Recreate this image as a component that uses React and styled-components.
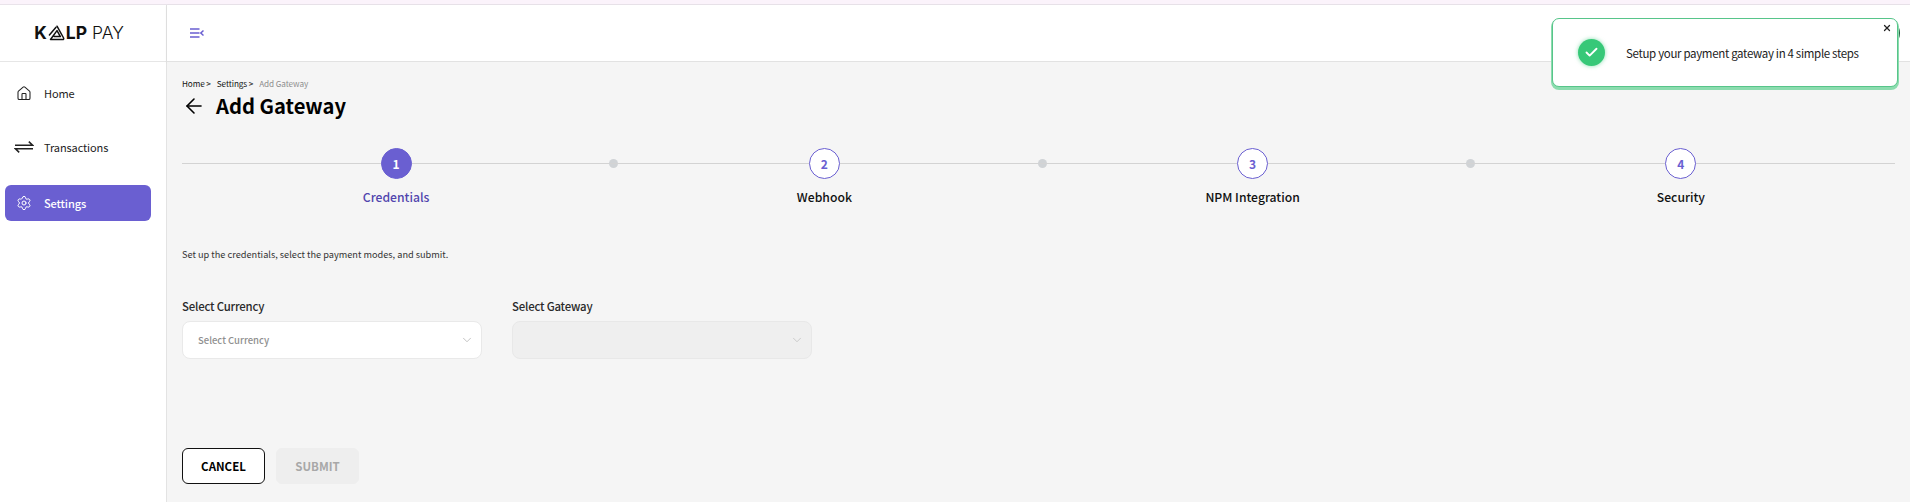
import React from 'react';
import styled, { createGlobalStyle } from 'styled-components';
import { ArrowLeft, Check, ChevronDown, Home, Settings, X } from 'lucide-react';

const Global = createGlobalStyle`
  html, body { margin: 0; padding: 0; height: 502px; overflow: hidden; background: #f5f5f5; }
  * { box-sizing: border-box; }
  body { font-family: "Noto Sans CJK JP", "Noto Sans", sans-serif; color: #111; }
`;

const brand = '#6a5fd1';

const Page = styled.div`
  position: relative;
  width: 1910px;
  height: 502px;
  display: flex;
  flex-direction: column;
  overflow: hidden;
`;

const TopStrip = styled.div`
  height: 5px;
  flex: none;
  background: #fbf3fb;
  border-bottom: 1px solid #e9e3ea;
`;

const Shell = styled.div`
  flex: 1;
  display: flex;
  min-height: 0;
`;

const Sidebar = styled.aside`
  width: 167px;
  flex: none;
  background: #fff;
  border-right: 1px solid #e3e3e3;
`;

const LogoBar = styled.div`
  height: 57px;
  display: flex;
  align-items: center;
  justify-content: center;
  padding-right: 8px;
  border-bottom: 1px solid #e6e6e6;
  font-family: "Inter", "Liberation Sans", sans-serif;
  font-size: 17.5px;
  line-height: 1;
  color: #111;
`;

const LogoBold = styled.span`
  font-weight: 700;
`;

const LogoLight = styled.span`
  font-weight: 300;
  margin-left: 5px;
`;

const Nav = styled.nav`
  display: flex;
  flex-direction: column;
  padding: 13px 15px 0 5px;
`;

const NavItem = styled.div`
  height: 36px;
  margin-top: ${p => p.$gap}px;
  display: flex;
  align-items: center;
  padding-left: 11px;
  gap: 12px;
  border-radius: 6px;
  font-size: 11px;
  letter-spacing: -0.1px;
  font-weight: ${p => (p.$active ? 500 : 400)};
  background: ${p => (p.$active ? brand : 'transparent')};
  color: ${p => (p.$active ? '#fff' : '#222')};
`;

const NavIcon = styled.span`
  width: 16px;
  display: flex;
  justify-content: center;
`;

const Main = styled.div`
  flex: 1;
  min-width: 0;
  display: flex;
  flex-direction: column;
`;

const Header = styled.header`
  height: 57px;
  flex: none;
  display: flex;
  align-items: center;
  justify-content: space-between;
  padding: 0 0 0 23px;
  background: #fff;
  border-bottom: 1px solid #e2e2e2;
  box-shadow: 0 1px 3px rgba(0, 0, 0, 0.06);
`;

const Avatar = styled.div`
  width: 30px;
  height: 30px;
  border-radius: 50%;
  background: #1f5b3d;
  margin-right: 10px;
`;

const Content = styled.main`
  flex: 1;
  padding: 15px 15px 0 15px;
  background: #f5f5f5;
`;

const Crumbs = styled.div`
  display: flex;
  gap: 6px;
  height: 12px;
  align-items: center;
  font-size: 8.2px;
  letter-spacing: -0.1px;
  color: #111;
`;

const CrumbLast = styled.span`
  color: #8e8e8e;
`;

const TitleRow = styled.div`
  display: flex;
  align-items: center;
  gap: 10px;
  margin-top: 2px;
  height: 30px;
`;

const Title = styled.h1`
  margin: 0;
  font-size: 20.2px;
  font-weight: 700;
  line-height: 30px;
  color: #000;
`;

const Stepper = styled.div`
  display: grid;
  grid-template-columns: repeat(4, 1fr);
  margin-top: 27px;
`;

const Step = styled.div`
  position: relative;
  display: flex;
  flex-direction: column;
  align-items: center;

  &::before {
    content: '';
    position: absolute;
    left: 0;
    right: 0;
    top: 15px;
    height: 1px;
    background: #d3d3d3;
  }

  &:not(:last-child)::after {
    content: '';
    position: absolute;
    right: -8px;
    top: 11px;
    width: 9px;
    height: 9px;
    border-radius: 50%;
    background: #d0d3d6;
  }
`;

const StepCircle = styled.div`
  position: relative;
  z-index: 1;
  width: 31px;
  height: 31px;
  border-radius: 50%;
  display: flex;
  align-items: center;
  justify-content: center;
  font-size: 12px;
  font-weight: 700;
  background: ${p => (p.$active ? brand : '#fff')};
  border: 1px solid ${brand};
  color: ${p => (p.$active ? '#fff' : brand)};
`;

const StepLabel = styled.div`
  margin-top: 8px;
  font-size: 12.2px;
  line-height: 20px;
  font-weight: 500;
  color: ${p => (p.$active ? '#5145ae' : '#111')};
`;

const Hint = styled.p`
  margin: 39px 0 0;
  font-size: 9.2px;
  line-height: 16px;
  color: #333;
`;

const Fields = styled.div`
  display: flex;
  gap: 30px;
  margin-top: 35px;
`;

const Field = styled.div`
  width: 300px;
`;

const FieldLabel = styled.div`
  font-size: 11.4px;
  letter-spacing: -0.2px;
  line-height: 18px;
  font-weight: 500;
  color: #2a2a2a;
`;

const SelectBox = styled.div`
  margin-top: 6px;
  height: 38px;
  display: flex;
  align-items: center;
  justify-content: space-between;
  padding: 0 7px 0 15px;
  border-radius: 8px;
  font-size: 9.5px;
  font-weight: 500;
  color: #8f8f8f;
  background: ${p => (p.$disabled ? '#efefef' : '#fff')};
  border: 1px solid ${p => (p.$disabled ? '#e8e8e8' : '#e9e9e9')};
`;

const Actions = styled.div`
  display: flex;
  gap: 11px;
  margin-top: 89px;
`;

const Button = styled.button`
  width: 83px;
  height: 36px;
  padding: 0;
  border-radius: 6px;
  font-family: inherit;
  font-size: 11.5px;
  font-weight: 700;
  background: ${p => (p.$muted ? '#eeeeee' : '#fff')};
  color: ${p => (p.$muted ? '#a8a8a8' : '#000')};
  border: 1px solid ${p => (p.$muted ? '#eeeeee' : '#111')};
`;

const Toast = styled.div`
  position: absolute;
  left: 1552px;
  top: 18px;
  width: 346px;
  height: 69px;
  display: flex;
  align-items: center;
  padding-left: 25px;
  gap: 21px;
  background: #fff;
  border: 1px solid #57c58a;
  border-radius: 7px;
  box-shadow: 0 2px 0 1px #8bdcae;
  font-size: 11.5px;
  letter-spacing: -0.33px;
  color: #1c1c1c;
`;

const ToastIcon = styled.div`
  width: 27px;
  height: 27px;
  flex: none;
  border-radius: 50%;
  display: flex;
  align-items: center;
  justify-content: center;
  background: #37c878;
  box-shadow: 0 0 4px rgba(55, 200, 120, 0.6);
  color: #fff;
`;

const ToastClose = styled.span`
  position: absolute;
  right: 5px;
  top: 4px;
  display: flex;
  color: #222;
`;

function CollapseIcon() {
  return (
    <svg width="14" height="10" viewBox="0 0 14 10" fill="none" stroke={brand} strokeWidth="1.5">
      <path d="M0 1h9.5M0 5h9.5M0 9h9.5" />
      <path d="M13.5 2.5 10.8 5l2.7 2.5" />
    </svg>
  );
}

function SwapIcon() {
  return (
    <svg width="20" height="14" viewBox="0 0 20 14" fill="none" stroke="#222" strokeWidth="1.5" style={{ flex: 'none' }}>
      <path d="M1 5.2h17.5L14.8 1.6" />
      <path d="M19 8.8H1.5l3.7 3.6" />
    </svg>
  );
}

function LogoMark() {
  return (
    <svg width="17" height="16" viewBox="0 0 17 16" fill="none" stroke="#111" strokeWidth="1.5" strokeLinejoin="round" strokeLinecap="round" style={{ margin: '0 1px' }}>
      <path d="M9 1.2 15.6 13a1 1 0 0 1-.9 1.5H2.5L9 5.6l3.4 6H6.2" />
      <path d="M8 2.2 1.4 10" />
    </svg>
  );
}

const steps = ['Credentials', 'Webhook', 'NPM Integration', 'Security'];

export default function App() {
  return (
    <Page>
      <Global />
      <TopStrip />
      <Shell>
        <Sidebar>
          <LogoBar>
            <LogoBold>K</LogoBold>
            <LogoMark />
            <LogoBold>LP</LogoBold>
            <LogoLight>PAY</LogoLight>
          </LogoBar>
          <Nav>
            <NavItem $gap={0}>
              <NavIcon><Home size={17} strokeWidth={1.6} /></NavIcon>
              Home
            </NavItem>
            <NavItem $gap={18}>
              <NavIcon><SwapIcon /></NavIcon>
              Transactions
            </NavItem>
            <NavItem $gap={20} $active>
              <NavIcon><Settings size={18} strokeWidth={1.5} /></NavIcon>
              Settings
            </NavItem>
          </Nav>
        </Sidebar>
        <Main>
          <Header>
            <CollapseIcon />
            <Avatar />
          </Header>
          <Content>
            <Crumbs>
              <span>Home &gt;</span>
              <span>Settings &gt;</span>
              <CrumbLast>Add Gateway</CrumbLast>
            </Crumbs>
            <TitleRow>
              <ArrowLeft size={24} strokeWidth={1.6} color="#000" />
              <Title>Add Gateway</Title>
            </TitleRow>
            <Stepper>
              {steps.map((label, i) => (
                <Step key={label}>
                  <StepCircle $active={i === 0}>{i + 1}</StepCircle>
                  <StepLabel $active={i === 0}>{label}</StepLabel>
                </Step>
              ))}
            </Stepper>
            <Hint>Set up the credentials, select the payment modes, and submit.</Hint>
            <Fields>
              <Field>
                <FieldLabel>Select Currency</FieldLabel>
                <SelectBox>
                  Select Currency
                  <ChevronDown size={14} strokeWidth={1.2} color="#aaa" />
                </SelectBox>
              </Field>
              <Field>
                <FieldLabel>Select Gateway</FieldLabel>
                <SelectBox $disabled>
                  <span />
                  <ChevronDown size={14} strokeWidth={1.2} color="#bbb" />
                </SelectBox>
              </Field>
            </Fields>
            <Actions>
              <Button>CANCEL</Button>
              <Button $muted>SUBMIT</Button>
            </Actions>
          </Content>
        </Main>
      </Shell>
      <Toast>
        <ToastIcon><Check size={15} strokeWidth={3} /></ToastIcon>
        Setup your payment gateway in 4 simple steps
        <ToastClose><X size={10} strokeWidth={3} /></ToastClose>
      </Toast>
    </Page>
  );
}
